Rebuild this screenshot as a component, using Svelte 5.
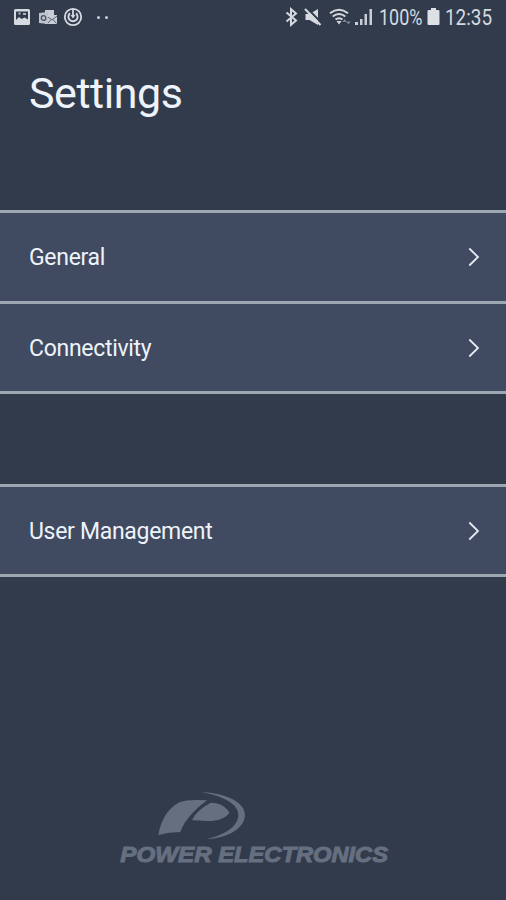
<script lang="ts">
  interface Item {
    label: string;
  }

  const groups: Item[][] = [
    [{ label: "General" }, { label: "Connectivity" }],
    [{ label: "User Management" }],
  ];
</script>

<div class="screen">
  <div class="status-bar">
    <div class="notifications">
      <!-- picture -->
      <svg width="18" height="18" viewBox="0 0 18 18">
        <rect x="1" y="1" width="16" height="16" rx="1.5" fill="#d6dae0" />
        <path d="M3 3.5h12v8l-3.5-2-3 1.5-2.5-2-3 3z" fill="#323b4c" />
        <path d="M5.5 4.5h2v2h-2zM10 5h3v2h-3z" fill="#aeb5c0" />
      </svg>
      <!-- mail -->
      <svg class="mail" width="19" height="18" viewBox="0 0 19 18">
        <path d="M6 2h9v5h3v9H6z" fill="#c9ced6" />
        <path d="M8 8.5l5 3.500 5-4M8.500 15.500l3.500-4M17.500 15.500l-3.500-4" fill="none" stroke="#566071" stroke-width="1" />
        <path d="M0 5l9-1v12l-9-1z" fill="#bdc3cc" />
        <circle cx="4.600" cy="10" r="2.300" fill="none" stroke="#465064" stroke-width="1.300" />
      </svg>
      <!-- sync -->
      <svg class="sync" width="20" height="20" viewBox="0 0 20 20" fill="none" stroke="#d6dae0">
        <circle cx="10" cy="10" r="8.200" stroke-width="1.800" />
        <path d="M7 6.200a4.600 4.600 0 1 0 6 0" stroke-width="1.900" />
        <path d="M10 2v7" stroke-width="1.800" />
        <path d="M7.500 8h5L10 11.500z" fill="#d6dae0" stroke="none" />
      </svg>
      <span class="more"><i></i><i></i></span>
    </div>
    <div class="system">
      <!-- bluetooth -->
      <svg width="13" height="20" viewBox="0 0 13 20" fill="none" stroke="#d6dae0" stroke-width="2">
        <path d="M1.500 5.500l9.500 8-5 4.300V2.200l5 4.300-9.500 8" />
      </svg>
      <!-- muted -->
      <svg class="mute" width="18" height="18" viewBox="0 0 18 18">
        <path d="M1.500 6h4L14 1v16l-8.500-5h-4z" fill="#d6dae0" />
        <path d="M3 0l15 15.500" stroke="#323b4c" stroke-width="2" />
        <path d="M1 1l15.500 16" stroke="#d6dae0" stroke-width="2" />
      </svg>
      <!-- wifi -->
      <svg class="wifi" width="22" height="20" viewBox="0 0 22 20" fill="none" stroke="#d6dae0" stroke-width="1.900">
        <path d="M1 6.300q9-7 18 0M3.700 9.500q6.300-5 12.600 0M6.500 12.600q3.500-2.800 7 0" />
        <path d="M7.500 14h5L10 17.500z" fill="#d6dae0" stroke="none" />
        <path d="M13.500 15l2.200-3 2.200 3zM17.200 14.500l2.200 3 2.200-3z" fill="#7e8797" stroke="none" />
      </svg>
      <!-- signal -->
      <svg class="signal" width="19" height="18" viewBox="0 0 19 18" fill="#c9ced6">
        <path d="M1 14h3v3H1zM6 11h2.500v6H6zM10.500 6H13v11h-2.500zM15.500 1H18v16h-2.500z" />
      </svg>
      <svg class="percent" width="44" height="34" viewBox="0 0 44 34">
        <text x="0" y="24.500" textLength="43.500" lengthAdjust="spacingAndGlyphs">100%</text>
      </svg>
      <!-- battery -->
      <svg class="battery" width="13" height="18" viewBox="0 0 13 18" fill="#dde0e5">
        <path d="M4 0h5v2h2.500q1 0 1 1v13q0 1-1 1h-10q-1 0-1-1V3q0-1 1-1H4z" />
      </svg>
      <svg class="clock" width="48" height="34" viewBox="0 0 48 34">
        <text x="0" y="24.500" textLength="47" lengthAdjust="spacingAndGlyphs">12:35</text>
      </svg>
    </div>
  </div>

  <h1>Settings</h1>

  <div class="groups">
    {#each groups as group}
      <div class="group">
        {#each group as item}
          <button class="row">
            <span>{item.label}</span>
            <svg width="12" height="20" viewBox="0 0 12 20" fill="none" stroke="#e3e9f3" stroke-width="1.800">
              <path d="M1.300 1.500L10 10l-8.700 8.500" />
            </svg>
          </button>
        {/each}
      </div>
    {/each}
  </div>

  <div class="brand">
    <svg width="290" height="90" viewBox="0 0 870 270" fill="#666f80">
      <path d="M145 165C151 128 171 84 210 66Q232 57 292 61C262 82 224 118 211 156Q176 156 145 165Z" />
      <path d="M246 121C256 96 284 78 302 68C329 68 349 80 358 98C348 115 319 124 291 123Q264 122 246 121Z" />
      <path d="M274 36C348 39 405 67 405 105C404 146 350 176 289 177C341 166 382 141 385 108C388 73 340 48 274 36Z" />
      <text x="31" y="245" textLength="274" lengthAdjust="spacingAndGlyphs">POWER</text>
      <text x="325" y="245" textLength="509" lengthAdjust="spacingAndGlyphs">ELECTRONICS</text>
    </svg>
  </div>
</div>

<style>
  :global(body) {
    margin: 0;
    background: #323b4c;
  }

  .screen {
    display: flex;
    flex-direction: column;
    width: 506px;
    height: 900px;
    overflow: hidden;
    background: #323b4c;
    color: #eef3fb;
    font-family: Roboto, "Liberation Sans", sans-serif;
  }

  .status-bar {
    display: flex;
    flex-shrink: 0;
    justify-content: space-between;
    height: 34px;
    padding: 0 13px 0 13px;
  }

  .notifications,
  .system {
    display: flex;
    align-items: center;
  }

  .mail {
    margin-left: 8px;
  }

  .sync {
    margin-left: 5px;
  }

  .more {
    display: flex;
    gap: 5px;
    margin-left: 14px;
  }

  .more i {
    width: 3px;
    height: 3px;
    border-radius: 50%;
    background: #c9ced6;
  }

  .mute {
    margin-left: 6px;
  }

  .wifi {
    margin-left: 7px;
  }

  .signal {
    margin-left: 3px;
  }

  .percent {
    margin-left: 6px;
  }

  .battery {
    margin-left: 4px;
  }

  .clock {
    margin-left: 5px;
  }

  .system text {
    font-size: 22px;
    fill: #d6dae0;
  }

  .percent,
  .clock {
    overflow: visible;
  }

  h1 {
    margin: 32px 0 0 29px;
    font-size: 43px;
    line-height: 54px;
    font-weight: 400;
    letter-spacing: -0.45px;
  }

  .groups {
    display: flex;
    flex-direction: column;
    gap: 90px;
    margin-top: 90px;
  }

  .group {
    border-top: 3px solid #9da7b2;
  }

  .row {
    display: flex;
    align-items: center;
    justify-content: space-between;
    box-sizing: border-box;
    width: 100%;
    height: 90px;
    padding: 1px 26px 0 29px;
    border: 0;
    border-bottom: 3px solid #9da7b2;
    border-radius: 0;
    background: #404a60;
    color: inherit;
    font-family: inherit;
    font-size: 23px;
    letter-spacing: -0.3px;
    text-align: left;
  }

  .row:first-child:not(:last-child) {
    height: 91px;
    padding-top: 0;
  }

  .brand {
    margin: auto 0 30px 110px;
    height: 90px;
  }

  .brand text {
    font-family: "Liberation Sans", sans-serif;
    font-size: 68px;
    font-weight: 700;
    font-style: italic;
    stroke: #666f80;
    stroke-width: 3px;
  }
</style>
